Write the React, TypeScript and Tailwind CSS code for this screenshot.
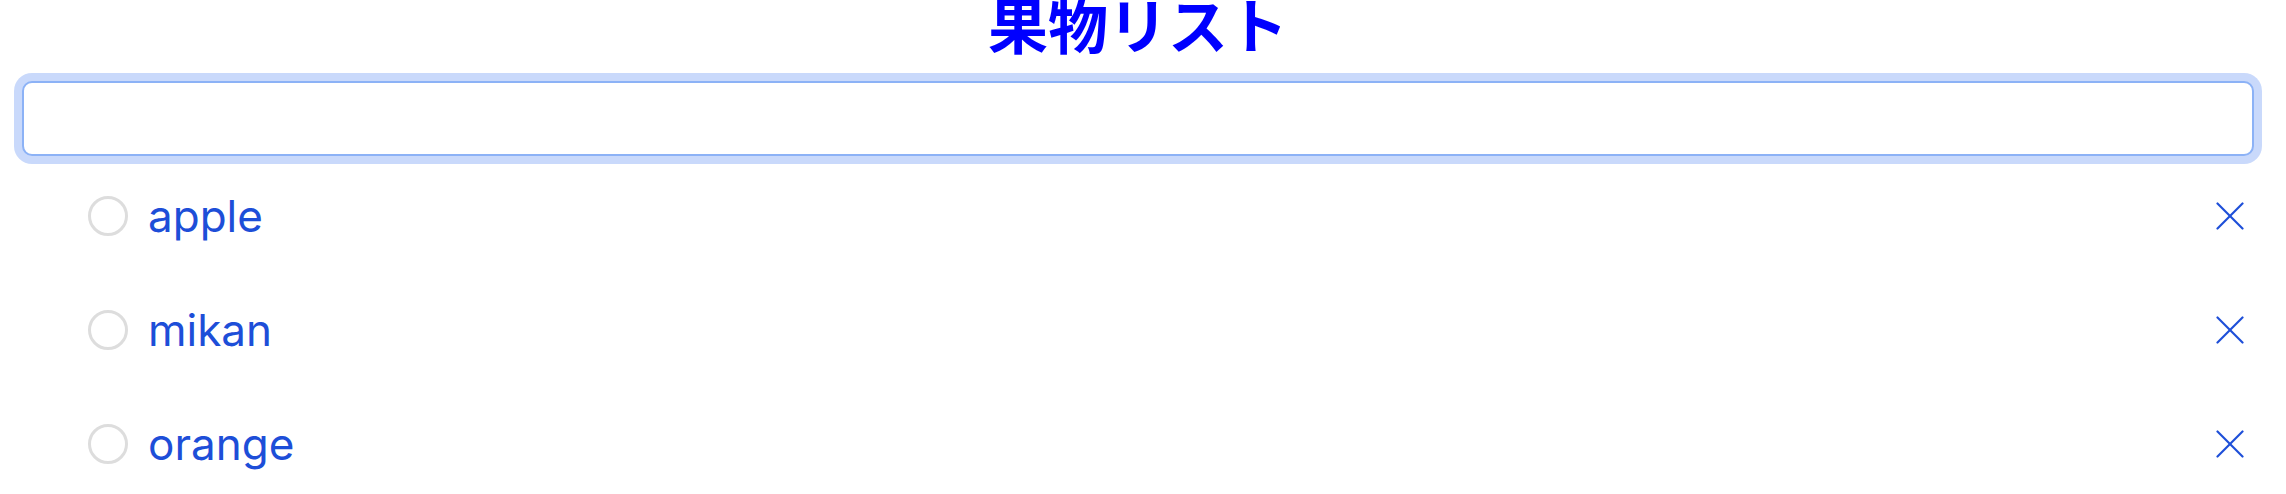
import React from "react";

const items = ["apple", "mikan", "orange"];

function XIcon() {
  return (
    <svg width="28" height="28" viewBox="0 0 28 28" fill="none" stroke="currentColor" strokeWidth="2.2" strokeLinecap="round">
      <line x1="1.5" y1="1.5" x2="26.5" y2="26.5" />
      <line x1="26.5" y1="1.5" x2="1.5" y2="26.5" />
    </svg>
  );
}

export default function App() {
  return (
    <div className="w-[2286px] h-[494px] overflow-hidden bg-white pl-[22px] pr-[32px]">
      <h1
        className="text-center text-[60px] leading-[46px] font-bold text-[#0000ff]"
        style={{ fontFamily: '"Noto Sans CJK JP", "Noto Sans", sans-serif' }}
      >
        果物リスト
      </h1>
      <div className="mt-[35px]">
        <input
          type="text"
          className="block h-[75px] w-full rounded-[10px] border-2 border-[#8cb2f6] bg-white shadow-[0_0_0_8px_#c9d9fb] outline-none"
        />
      </div>
      <ul
        className="mt-[3px] pl-[66px] pr-[10px] text-[#1d4ed8]"
        style={{ fontFamily: 'Inter, "Noto Sans", sans-serif' }}
      >
        {items.map((it) => (
          <li key={it} className="flex h-[114px] items-center">
            <span className="h-[40px] w-[40px] shrink-0 rounded-full border-[3px] border-[#dddddd]" />
            <span className="ml-[20px] flex-1 text-[44px] leading-none">{it}</span>
            <span className="text-[#1d4ed8]">
              <XIcon />
            </span>
          </li>
        ))}
      </ul>
    </div>
  );
}
